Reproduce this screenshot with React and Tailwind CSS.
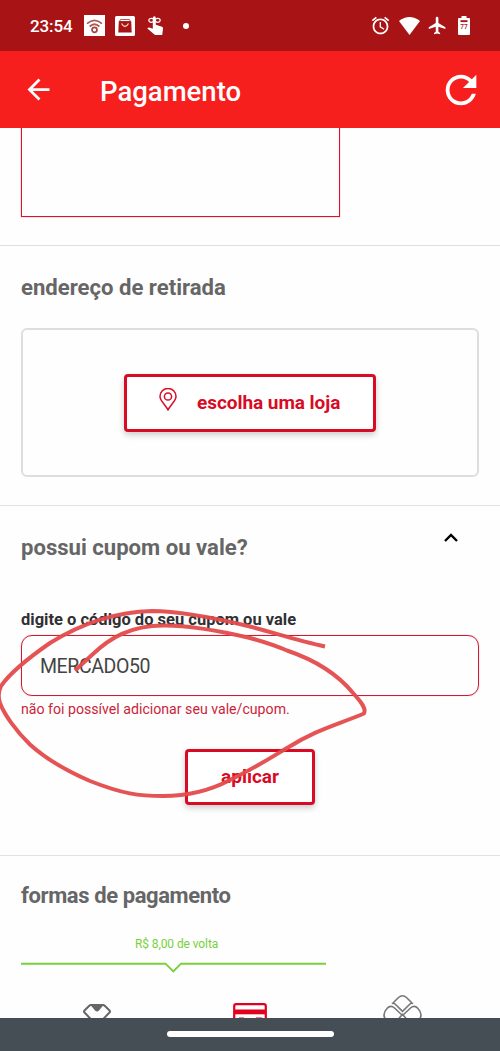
function StatusBar() {
  return (
    <div className="flex h-[51px] shrink-0 items-center bg-[#a81315] text-white">
      <span className="ml-[30px] w-[54px] text-[17px] font-medium leading-5 tracking-[-0.1px]">23:54</span>
      <svg className="h-[21px] w-[21px]" viewBox="0 0 21 21" fill="none">
        <path d="M0 0h21v21H0z" fill="#fff" />
        <path d="M3 8.700Q10.500 2 18 8.700M5.600 11.500Q10.500 7 15.400 11.500" stroke="#a85a58" strokeWidth="1.700" />
        <circle cx="10.500" cy="14.800" r="2.500" stroke="#a84542" strokeWidth="1.700" />
      </svg>
      <svg className="ml-2.5 h-5 w-5" viewBox="0 0 20 20" fill="none">
        <rect width="20" height="20" rx="1.500" fill="#fff" />
        <path d="M5.500 3.500h9l1 2h-11z" stroke="#a81315" strokeWidth=".7" />
        <path d="M3.800 5.200h12.400l.5 11.300H3.300z" fill="#a81315" />
        <path d="M6.500 7.500q3.500 6 7 0" stroke="#fbd3b8" strokeWidth="1.300" />
      </svg>
      <svg className="ml-3 h-5 w-[17px]" viewBox="0 0 17 20" fill="none">
        <path d="M5.800 1.700a1.500 1.500 0 0 1 3 0v7l6.200 2.100q1.300.5 1 2l-.8 6.300H8L.3 12.500q1-1.500 2.700-.8l2.800 1z" fill="#fff" />
        <ellipse cx="4.300" cy="4.300" rx="2.500" ry="2" stroke="#fff" strokeWidth="1.200" />
        <ellipse cx="10.700" cy="4.300" rx="2.500" ry="2" stroke="#fff" strokeWidth="1.200" />
      </svg>
      <span className="ml-[19px] h-[6px] w-[6px] rounded-full bg-white" />
      <div className="ml-auto mr-[30px] flex items-center">
        <svg className="h-[21px] w-[21px]" viewBox="0 0 24 24" fill="#fff">
          <path d="M22 5.720l-4.600-3.860-1.290 1.530 4.600 3.860L22 5.720zM7.880 3.390L6.600 1.860 2 5.710l1.290 1.530 4.590-3.850zM12.500 8H11v6l4.750 2.850.75-1.230-4-2.370V8zM12 4c-4.970 0-9 4.030-9 9s4.020 9 9 9c4.970 0 9-4.030 9-9s-4.030-9-9-9zm0 16c-3.870 0-7-3.130-7-7s3.130-7 7-7 7 3.130 7 7-3.130 7-7 7z" />
        </svg>
        <svg className="ml-2 h-[18px] w-[21px]" viewBox="0 0 21 18" fill="#fff">
          <path d="M0 4Q10.500-4 21 4L10.500 18z" />
        </svg>
        <svg className="ml-[7px] h-[21px] w-[21px]" viewBox="0 0 24 24" fill="#fff">
          <path d="M21 16v-2l-8-5V3.500c0-.83-.67-1.500-1.500-1.500S10 2.670 10 3.500V9l-8 5v2l8-2.500V19l-2 1.500V22l3.500-1 3.500 1v-1.500L13 19v-5.500l8 2.500z" />
        </svg>
        <svg className="ml-[10px] h-[19px] w-3" viewBox="0 0 12 19">
          <path d="M3.500 0h5v2H11q1 0 1 1v15q0 1-1 1H1q-1 0-1-1V3q0-1 1-1h2.500z" fill="#fff" />
          <path d="M2.500 4.200h7v1.900h-7z" fill="#a81315" />
          <text x="6" y="12.800" textAnchor="middle" fontSize="6.500" fontWeight="500" fill="#a81315">77</text>
        </svg>
      </div>
    </div>
  );
}

function Header() {
  return (
    <header className="flex h-[77px] shrink-0 items-center bg-[#f71e1e] text-white">
      <svg className="ml-[22px] h-[33px] w-[33px]" viewBox="0 0 24 24" fill="#fff">
        <path d="M20 11H7.830l5.590-5.590L12 4l-8 8 8 8 1.410-1.410L7.830 13H20v-2z" />
      </svg>
      <h1 className="ml-[45px] pt-1 text-[27.500px] font-medium leading-8">Pagamento</h1>
      <svg className="ml-auto mr-4 h-[46px] w-[46px]" viewBox="0 0 24 24" fill="#fff">
        <path d="M17.650 6.350C16.200 4.900 14.210 4 12 4c-4.420 0-7.990 3.580-7.990 8s3.570 8 7.990 8c3.730 0 6.840-2.550 7.730-6h-2.080c-.82 2.330-3.040 4-5.650 4-3.310 0-6-2.690-6-6s2.690-6 6-6c1.660 0 3.140.69 4.220 1.780L13 11h7V4l-2.350 2.350z" />
      </svg>
    </header>
  );
}

function PaymentOptions() {
  return (
    <>
      <svg className="mt-[8px] block h-3 w-[305px]" viewBox="0 0 305 12" fill="none" stroke="#78d03c" strokeWidth="1.900">
        <path d="M0 2.700h144.500l7.800 7.800L160 2.700h145" />
      </svg>
      <div className="mt-[21px] flex h-[25px] items-start overflow-hidden">
        <svg className="ml-[62px] mt-[10px] h-[30px] w-7 shrink-0" viewBox="0 0 28 30" fill="none" stroke="#666" strokeWidth="2">
          <path d="M8 1h12q1 0 2 1l4.500 4.500q1 1 0 2L14 21.500 1.500 8.500q-1-1 0-2L6 2q1-1 2-1z" />
          <path d="M7.500 1h13l-4.500 5.500q-2 2-4 0z" fill="#666" stroke="none" />
        </svg>
        <svg className="ml-[122px] mt-[9px] h-7 w-[34px] shrink-0" viewBox="0 0 34 28">
          <rect x="1.200" y="1.200" width="31.600" height="24" rx="2" fill="none" stroke="#e2001f" strokeWidth="2.200" />
          <path d="M1 6.500h32v4.800H1z" fill="#e2001f" />
          <path d="M6 15h5M23 15h6" stroke="#e2001f" strokeWidth="1" />
        </svg>
        <svg className="ml-[115px] h-10 w-10 shrink-0" viewBox="0 0 40 40" fill="none" stroke="#777" strokeWidth="1.600">
          <path d="M11 9l5.500-5.500q4-3.500 8 0L30 9M9.800 9.500q2-.8 3.500.7l7.200 7.100 7.200-7.100q1.500-1.500 3.500-.7" />
          <path d="M20.500 21.500l-8-7.500q-4-3.500-7.500.5-6 6.500 0 12.500M20.500 21.500l8-7.500q4-3.500 7.500.5 6 6.500 0 12.500" />
          <path d="M14.500 27l6-6.500 6 6.500" />
        </svg>
      </div>
    </>
  );
}

function Scribble() {
  return (
    <svg className="pointer-events-none absolute left-0 top-0 h-[1051px] w-[500px]" viewBox="0 0 500 1051" fill="none">
      <path
        d="M325 646.500C300 641 278 634 250 626.500C215 618 180 611 152 611C112 612 79 625 50 643C24 661 10 673 1 686C-2 692-2 697 0 703C4 714 16 731 30 744.500C47 760 67 771 90 781C123 794 139 796 163 796C190 796 211 790 230 780C253 769 267 760 287 748C318 729 334 726 364 713.500C367 707 358 699 353 693C335 671 309 658 287 650.500C272 644 261 641 250 638C216 630 190 625.500 165 625.500C130 625 109 639 93 654L75 670.500"
        stroke="#e44b4b"
        strokeOpacity=".95"
        strokeWidth="4"
        strokeLinejoin="round"
      />
    </svg>
  );
}

export default function App() {
  return (
    <div className="relative flex h-[1051px] w-[500px] flex-col overflow-hidden bg-[#fefefe] font-['Roboto',sans-serif]">
      <StatusBar />
      <Header />
      <main className="flex h-[890px] shrink-0 flex-col overflow-hidden text-[#666]">
        <section className="h-[118px] shrink-0 border-b border-[#dedede] px-[21px]">
          <div className="h-[89px] w-[319px] border border-t-0 border-[#e0102a] shadow-[0_0_1px_rgba(224,16,42,0.6)]" />
        </section>

        <section className="h-[260px] shrink-0 border-b border-[#e2e2e2] px-[21px] pt-[27px]">
          <h2 className="text-[22.100px] font-bold leading-7">endereço de retirada</h2>
          <div className="mt-[27px] flex h-[149px] items-center justify-center rounded-md border-2 border-[#dedede]">
            <button className="flex h-[58px] w-[252px] items-center rounded border-[3px] border-[#d90b24] bg-white text-[#d90b24] shadow-[0_3px_6px_rgba(0,0,0,0.2)]">
              <svg className="mb-[7px] ml-8 h-[23px] w-[18px]" viewBox="0 0 18 23" fill="none" stroke="currentColor" strokeWidth="1.500">
                <path d="M9 22C7.500 18 1 13 1 8.500a8 8 0 0 1 16 0C17 13 10.500 18 9 22z" strokeLinejoin="round" />
                <circle cx="9" cy="8.500" r="3.600" />
              </svg>
              <span className="ml-5 whitespace-nowrap text-[19px] font-bold leading-6 tracking-[-0.05px]">escolha uma loja</span>
            </button>
          </div>
        </section>

        <section className="h-[350px] shrink-0 border-b border-[#e2e2e2] px-[21px] pt-[27px]">
          <div className="flex items-start justify-between">
            <h2 className="text-[22.100px] font-bold leading-7">possui cupom ou vale?</h2>
            <svg className="mr-[21px] h-[9px] w-3.5" viewBox="0 0 14 9" fill="none" stroke="#000" strokeWidth="2.400">
              <path d="M1 8l6-6 6 6" />
            </svg>
          </div>
          <label className="mt-12 block text-[16.500px] font-bold leading-[22px] text-[#303033]">digite o código do seu cupom ou vale</label>
          <div className="mt-1 flex h-[61px] items-center rounded-[11px] border border-[#cf1b32] pl-[18px] pt-0.5 text-[19.500px] tracking-[-0.4px] text-[#444] shadow-[0_0_1px_rgba(207,27,50,0.6)]">
            MERCADO50
          </div>
          <p className="mt-[3px] text-[14.150px] leading-5 text-[#cc2339]">não foi possível adicionar seu vale/cupom.</p>
          <button className="mx-auto mt-[30px] block h-[56px] w-[130px] rounded border-[3px] border-[#d90b24] bg-white text-[19px] font-bold text-[#d90b24] shadow-[0_3px_6px_rgba(0,0,0,0.2)]">
            aplicar
          </button>
        </section>

        <section className="px-[21px] pt-[26px]">
          <h2 className="text-[22px] font-bold leading-7 tracking-[-0.4px]">formas de pagamento</h2>
          <p className="ml-[114px] mt-[26px] text-[12px] leading-4 tracking-[-0.1px] text-[#78d03c]">R$ 8,00 de volta</p>
          <div className="pt-px">
            <PaymentOptions />
          </div>
        </section>
      </main>
      <div className="flex h-[33px] shrink-0 justify-center bg-[#454e54] pt-[13px]">
        <div className="h-1.5 w-[167px] rounded-full bg-white" />
      </div>
      <Scribble />
    </div>
  );
}
